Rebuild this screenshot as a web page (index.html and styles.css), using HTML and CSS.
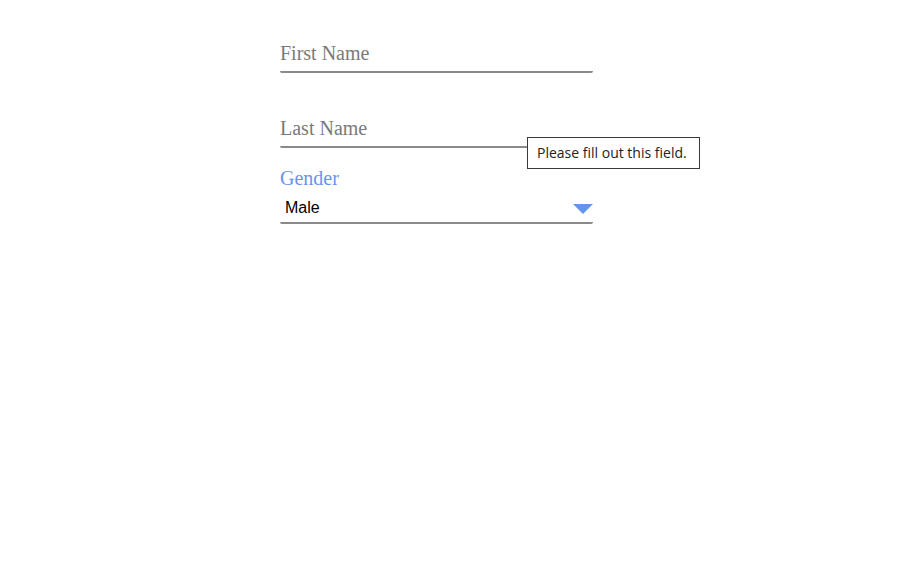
FILE: index.html
```html
<!DOCTYPE html>
<html>
<head>
<meta charset="utf-8">
<link rel="stylesheet" href="styles.css">
</head>
<body>
<form class="form">
  <div class="text-field"><span class="placeholder">First Name</span></div>
  <div class="text-field text-field--gap"><span class="placeholder">Last Name</span>
    <div class="tooltip">Please fill out this field.</div>
  </div>
  <div class="select-group">
    <div class="select-label">Gender</div>
    <div class="select">
      <span class="select-value">Male</span>
      <svg class="select-arrow" width="20" height="10" viewBox="0 0 20 10"><polygon points="0,0 20,0 10,10" fill="#6495ed"/></svg>
    </div>
  </div>
</form>
</body>
</html>
```
FILE: styles.css
```css
html, body {
  margin: 0;
  padding: 0;
  background: #ffffff;
}
.form {
  display: flex;
  flex-direction: column;
  padding: 42px 0 0 280px;
  margin: 0;
}
.text-field {
  position: relative;
  width: 313px;
  font-family: "Liberation Serif", serif;
  font-size: 20px;
  line-height: 23px;
  padding-bottom: 6px;
  border-bottom: 2px solid #8a8a8a;
  border-radius: 0 0 2px 2px;
}
.text-field--gap {
  margin-top: 44px;
}
.placeholder {
  color: #7a7a7a;
}
.tooltip {
  position: absolute;
  left: 247px;
  top: 20px;
  width: 171px;
  height: 30px;
  box-sizing: content-box;
  border: 1px solid #3a3a3a;
  background: #ffffff;
  color: #222222;
  font-family: "Open Sans", sans-serif;
  font-size: 14px;
  line-height: 30px;
  padding: 0;
  text-indent: 9px;
  white-space: nowrap;
}
.select-group {
  display: flex;
  flex-direction: column;
  width: 313px;
  margin-top: 19px;
}
.select-label {
  font-family: "Liberation Serif", serif;
  font-size: 20px;
  line-height: 23px;
  color: #6495ed;
}
.select {
  display: flex;
  align-items: center;
  justify-content: space-between;
  margin-top: 9px;
  padding: 0 0 5px 5px;
  border-bottom: 2px solid #8a8a8a;
  border-radius: 0 0 2px 2px;
}
.select-value {
  font-family: "Liberation Sans", Arial, sans-serif;
  font-size: 16px;
  line-height: 18px;
  color: #000000;
}
.select-arrow {
  display: block;
  margin-top: 1px;
}
```
